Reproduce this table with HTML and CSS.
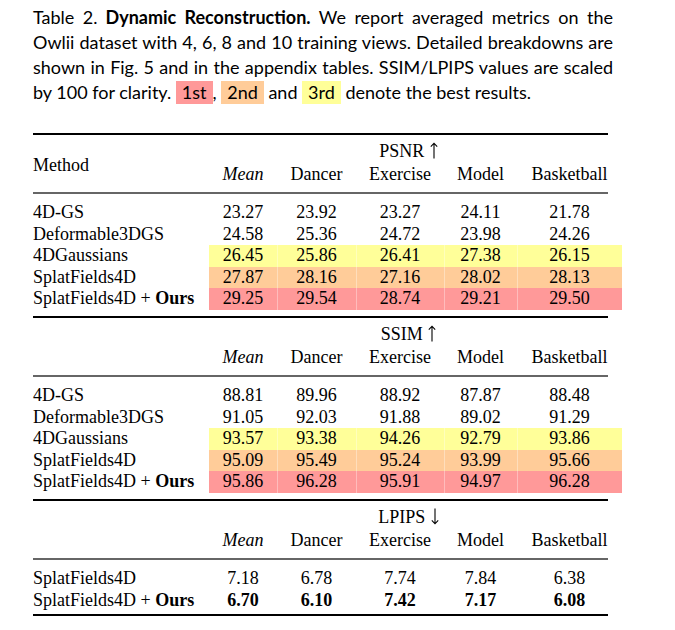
FILE: index.html
```html
<!DOCTYPE html>
<html>
<head>
<meta charset="utf-8">
<link rel="stylesheet" href="styles.css">
</head>
<body>
<div class="page">
  <div class="caption">
    <span class="line">Table 2.<span class="gap"></span><b>Dynamic Reconstruction.</b> We report averaged metrics on the</span>
    <span class="line">Owlii dataset with 4, 6, 8 and 10 training views. Detailed breakdowns are</span>
    <span class="line">shown in Fig. 5 and in the appendix tables. SSIM/LPIPS values are scaled</span>
    <span class="line last">by 100 for clarity. <span class="tag t1">1st</span>, <span class="tag t2">2nd</span> and <span class="tag t3">3rd</span> denote the best results.</span>
  </div>

  <div class="table">
    <div class="rule"></div>
    <div class="method">Method</div>
    <div class="group">PSNR <svg class="arrow" viewBox="0 0 8 17" width="8" height="17"><path d="M4 1.2V16.5M0.8 4.6L4 1.2L7.2 4.6" fill="none" stroke="#000" stroke-width="1.1"/></svg></div>
    <div class="col"><i>Mean</i></div><div class="col">Dancer</div><div class="col">Exercise</div><div class="col">Model</div><div class="col">Basketball</div>
    <div class="midrule"></div>

    <div class="row first"><div class="name">4D-GS</div><div class="num">23.27</div><div class="num">23.92</div><div class="num">23.27</div><div class="num">24.11</div><div class="num">21.78</div></div>
    <div class="row"><div class="name">Deformable3DGS</div><div class="num">24.58</div><div class="num">25.36</div><div class="num">24.72</div><div class="num">23.98</div><div class="num">24.26</div></div>
    <div class="row y"><div class="name">4DGaussians</div><div class="num">26.45</div><div class="num">25.86</div><div class="num">26.41</div><div class="num">27.38</div><div class="num">26.15</div></div>
    <div class="row o"><div class="name">SplatFields4D</div><div class="num">27.87</div><div class="num">28.16</div><div class="num">27.16</div><div class="num">28.02</div><div class="num">28.13</div></div>
    <div class="row r"><div class="name">SplatFields4D + <b>Ours</b></div><div class="num">29.25</div><div class="num">29.54</div><div class="num">28.74</div><div class="num">29.21</div><div class="num">29.50</div></div>

    <div class="rule sep"></div>
    <div class="method"></div>
    <div class="group">SSIM <svg class="arrow" viewBox="0 0 8 17" width="8" height="17"><path d="M4 1.2V16.5M0.8 4.6L4 1.2L7.2 4.6" fill="none" stroke="#000" stroke-width="1.1"/></svg></div>
    <div class="col"><i>Mean</i></div><div class="col">Dancer</div><div class="col">Exercise</div><div class="col">Model</div><div class="col">Basketball</div>
    <div class="midrule"></div>

    <div class="row first"><div class="name">4D-GS</div><div class="num">88.81</div><div class="num">89.96</div><div class="num">88.92</div><div class="num">87.87</div><div class="num">88.48</div></div>
    <div class="row"><div class="name">Deformable3DGS</div><div class="num">91.05</div><div class="num">92.03</div><div class="num">91.88</div><div class="num">89.02</div><div class="num">91.29</div></div>
    <div class="row y"><div class="name">4DGaussians</div><div class="num">93.57</div><div class="num">93.38</div><div class="num">94.26</div><div class="num">92.79</div><div class="num">93.86</div></div>
    <div class="row o"><div class="name">SplatFields4D</div><div class="num">95.09</div><div class="num">95.49</div><div class="num">95.24</div><div class="num">93.99</div><div class="num">95.66</div></div>
    <div class="row r"><div class="name">SplatFields4D + <b>Ours</b></div><div class="num">95.86</div><div class="num">96.28</div><div class="num">95.91</div><div class="num">94.97</div><div class="num">96.28</div></div>

    <div class="rule sep"></div>
    <div class="method"></div>
    <div class="group">LPIPS <svg class="arrow" viewBox="0 0 8 17" width="8" height="17"><path d="M4 0.5V15.8M0.8 12.4L4 15.8L7.2 12.4" fill="none" stroke="#000" stroke-width="1.1"/></svg></div>
    <div class="col"><i>Mean</i></div><div class="col">Dancer</div><div class="col">Exercise</div><div class="col">Model</div><div class="col">Basketball</div>
    <div class="midrule"></div>

    <div class="row first"><div class="name">SplatFields4D</div><div class="num">7.18</div><div class="num">6.78</div><div class="num">7.74</div><div class="num">7.84</div><div class="num">6.38</div></div>
    <div class="row bold"><div class="name">SplatFields4D + <b>Ours</b></div><div class="num">6.70</div><div class="num">6.10</div><div class="num">7.42</div><div class="num">7.17</div><div class="num">6.08</div></div>

    <div class="rule bottom"></div>
  </div>
</div>
</body>
</html>
```

FILE: styles.css
```css
html, body {
  margin: 0;
  padding: 0;
  background: #fff;
  color: #000;
}

.page {
  width: 675px;
  padding-top: 5px;
}

.caption {
  margin: 0 0 0 33px;
  width: 580px;
  font-family: "Lato", "Liberation Sans", sans-serif;
  font-size: 18px;
  line-height: 25px;
}

.line {
  display: block;
  white-space: nowrap;
  text-align: justify;
  text-align-last: justify;
}

.line.last {
  text-align: left;
  text-align-last: left;
}

.caption b {
  font-weight: 700;
}

.gap {
  display: inline-block;
  width: 8px;
}

.tag {
  display: inline-block;
  line-height: 23px;
  padding: 0 6px;
}

.t1 { background: #ff9999; }
.t2 { background: #ffcc99; }
.t3 { background: #ffff99; }

.table {
  margin: 28px 0 0 33px;
  width: 589px;
  display: grid;
  grid-template-columns: 176px 68px 79px 88px 73px 105px;
  font-family: "Liberation Serif", "Times New Roman", serif;
  font-size: 18px;
}

.rule {
  grid-column: 1 / -1;
  margin-right: 14px;
  height: 2px;
  background: #000;
}

.rule.sep {
  margin-top: 6px;
}

.rule.bottom {
  margin-top: 3px;
}

.midrule {
  grid-column: 1 / -1;
  margin-right: 14px;
  height: 2px;
  background: #666;
  margin-bottom: 8px;
}

.method {
  grid-row: span 2;
  align-self: center;
  padding-top: 3px;
  line-height: 23px;
}

.group {
  grid-column: 2 / -1;
  margin-right: 14px;
  padding-top: 5px;
  line-height: 23px;
  text-align: center;
}

.arrow {
  vertical-align: -2px;
  margin-left: 1px;
}

.col {
  line-height: 23px;
  padding-bottom: 6px;
  text-align: center;
}

.row {
  display: contents;
}

.row > div {
  line-height: 21.6px;
}

.name {
  text-align: left;
  white-space: nowrap;
}

.num {
  text-align: center;
}

.row.bold .num {
  font-weight: 700;
}

.row.y .num { background: #ffff99; }
.row.o .num { background: #ffcc99; }
.row.r .num { background: #ff9999; }

.row.y .num + .num,
.row.o .num + .num,
.row.r .num + .num {
  box-shadow: inset 1px 0 0 rgba(255, 255, 255, 0.35);
}
```
